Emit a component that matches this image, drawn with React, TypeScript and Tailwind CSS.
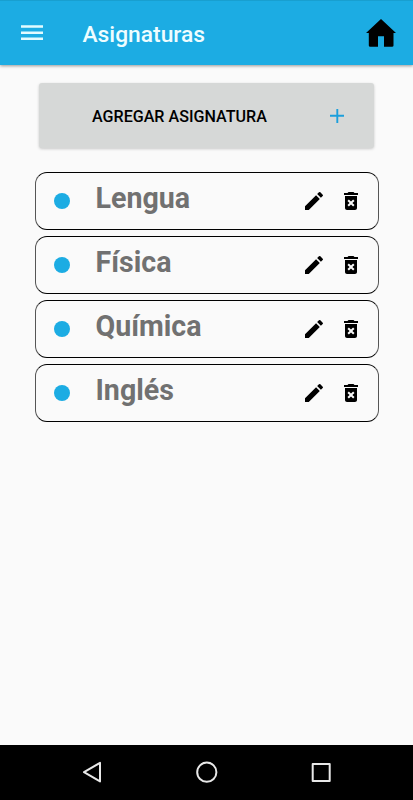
interface IconProps {
  className?: string;
}

const MenuIcon = ({ className }: IconProps) => (
  <svg viewBox="0 0 22 16" className={className} fill="currentColor">
    <path d="M0 0.2h22v2.6H0zM0 6.4h22V9H0zM0 12.5h22v2.6H0z" />
  </svg>
);

const HomeIcon = ({ className }: IconProps) => (
  <svg viewBox="0 0 30 28" className={className} fill="currentColor">
    <path d="M15 0L30 14H27.5V26.4Q27.5 27.8 26 27.8H18V17.2H12V27.8H4.3Q2.8 27.8 2.8 26.4V14H0z" />
  </svg>
);

const PlusIcon = ({ className }: IconProps) => (
  <svg viewBox="0 0 14 14" className={className} fill="none" stroke="currentColor" strokeWidth="1.9">
    <path d="M7.3 0v14M0 6.8h14" />
  </svg>
);

const EditIcon = ({ className }: IconProps) => (
  <svg viewBox="0 0 24 24" className={className} fill="currentColor">
    <path d="M3 17.25V21h3.75L17.81 9.94l-3.75-3.75L3 17.25zM20.71 7.04a1 1 0 0 0 0-1.41l-2.34-2.34a1 1 0 0 0-1.41 0l-1.83 1.83 3.75 3.75 1.83-1.83z" />
  </svg>
);

const DeleteIcon = ({ className }: IconProps) => (
  <svg viewBox="0 0 24 24" className={className} fill="currentColor">
    <path d="M6 19c0 1.1.9 2 2 2h8c1.1 0 2-.9 2-2V7H6v12zm2.46-7.12l1.41-1.41L12 12.59l2.12-2.12 1.41 1.41L13.41 14l2.12 2.12-1.41 1.41L12 15.41l-2.12 2.12-1.41-1.41L10.59 14l-2.13-2.12zM15.5 4l-1-1h-5l-1 1H5v2h14V4z" />
  </svg>
);

const subjects = ["Lengua", "Física", "Química", "Inglés"];

const Header = () => (
  <header className="relative flex h-[65px] shrink-0 items-center border-t border-[#189fd0] bg-[#1cace3] pl-[21px] pr-[17px] shadow-[0_1px_3px_rgba(0,0,0,0.4)]">
    <button aria-label="Menú" className="text-[#e2fbff]">
      <MenuIcon className="h-4 w-[22px]" />
    </button>
    <h1 className="ml-[39.5px] mt-1 flex-1 text-[22.8px] font-medium leading-7 text-[#eefdff]">Asignaturas</h1>
    <button aria-label="Inicio" className="text-black">
      <HomeIcon className="h-7 w-[30px]" />
    </button>
  </header>
);

const SubjectRow = ({ name }: { name: string }) => (
  <li className="flex h-[58px] items-center rounded-[12px] border border-x-[#555] border-y-black pl-[18px] pr-[15px]">
    <span className="size-4 shrink-0 rounded-full bg-[#1cace3]" />
    <span className="mb-1.5 ml-[25.5px] flex-1 text-[28.6px] font-bold leading-8 text-[#717171]">{name}</span>
    <button aria-label="Editar" className="mb-px">
      <EditIcon className="size-6" />
    </button>
    <button aria-label="Eliminar" className="mb-px ml-[13px]">
      <DeleteIcon className="size-6" />
    </button>
  </li>
);

const SystemBar = () => (
  <footer className="flex h-[55px] shrink-0 items-center justify-between bg-black px-[82px] pb-px text-[#e8e8e8]">
    <svg viewBox="0 0 20 22" className="h-[22px] w-5" fill="none" stroke="currentColor" strokeWidth="2" strokeLinejoin="round">
      <path d="M18 1.8v18.6L2 11.1z" />
    </svg>
    <svg viewBox="0 0 22 22" className="size-[22px]" fill="none" stroke="currentColor" strokeWidth="2">
      <circle cx="10.8" cy="11.2" r="9.6" />
    </svg>
    <svg viewBox="0 0 20 20" className="size-5" fill="none" stroke="currentColor" strokeWidth="2" strokeLinejoin="round">
      <path d="M1.7 1.9h17v17h-17z" />
    </svg>
  </footer>
);

const App = () => {
  return (
    <div className="flex h-[800px] w-[413px] flex-col bg-[#fafafa] font-[Roboto,sans-serif]">
      <Header />
      <main className="flex-1 pl-[35px] pr-[34px] pt-[18px]">
        <button className="ml-1 flex h-[65px] w-[335px] items-center rounded-[3px] bg-[#d6d8d7] pl-[53px] pr-[30px] shadow-[0_1px_3px_rgba(0,0,0,0.2)]">
          <span className="mt-[3px] flex-1 text-left text-[16.1px] font-medium leading-6 text-black">AGREGAR ASIGNATURA</span>
          <PlusIcon className="size-3.5 text-[#1c9fdc]" />
        </button>
        <ul className="mt-6 flex flex-col gap-1.5">
          {subjects.map((name) => (
            <SubjectRow key={name} name={name} />
          ))}
        </ul>
      </main>
      <SystemBar />
    </div>
  );
};

export default App;
